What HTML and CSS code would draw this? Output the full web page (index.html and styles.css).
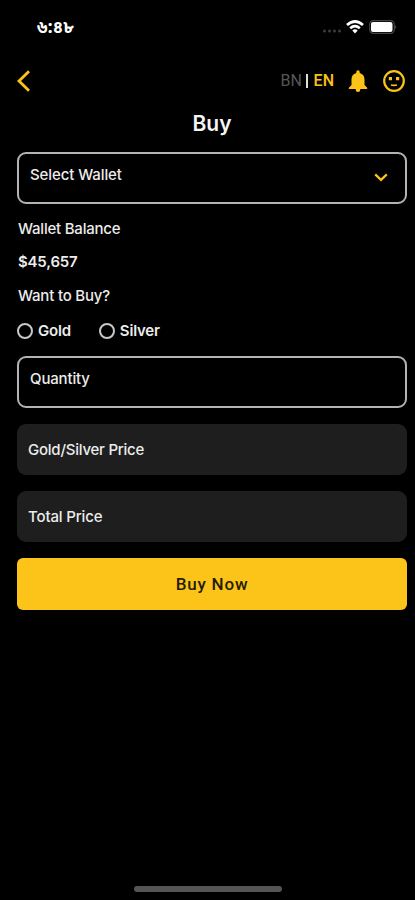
FILE: index.html
```html
<!DOCTYPE html>
<html lang="en">
<head>
<meta charset="utf-8">
<title>Buy</title>
<link rel="stylesheet" href="styles.css">
</head>
<body>
<main class="screen">
  <div class="status">
    <span class="time" lang="bn">৬:৪৮</span>
    <div class="signals">
      <svg class="dots" width="20" height="6" viewBox="0 0 20 6"><g fill="#3c3c3c"><circle cx="2.5" cy="3" r="1.5"/><circle cx="7.5" cy="3" r="1.5"/><circle cx="12.5" cy="3" r="1.5"/><circle cx="17.5" cy="3" r="1.5"/></g></svg>
      <svg class="wifi" width="18" height="14" viewBox="0 0 18 14"><g fill="none" stroke="#fff" stroke-width="2.7"><path d="M1 5Q9-2 17 5"/><path d="M4.2 8.2Q9 4 13.8 8.2"/></g><path d="M6.3 10.4Q9 8.2 11.7 10.4L9 13.6Z" fill="#fff"/></svg>
      <svg class="battery" width="28" height="14" viewBox="0 0 28 14"><rect x=".7" y=".7" width="24.6" height="12.6" rx="3.7" fill="none" stroke="#444" stroke-width="1.2"/><rect x="2" y="2" width="21.5" height="10" rx="2" fill="#fff"/><path d="M26.3 5Q28 7 26.3 9Z" fill="#777"/></svg>
    </div>
  </div>
  <header class="nav">
    <svg class="back" width="14" height="22" viewBox="0 0 14 22"><path d="M13 1.2L3 11L13 20.8" fill="none" stroke="#fcc419" stroke-width="2.8"/></svg>
    <div class="tools">
      <div class="lang"><span class="off">BN</span><i class="bar"></i><span class="on">EN</span></div>
      <svg class="bell" width="20" height="22" viewBox="0 0 20 22"><path d="M8.3 2a1.7 1.7 0 0 1 3.4 0v.9c3.2.8 4.8 3.3 4.8 6.6v5.6l2.7 2.7v1.2H.8v-1.2l2.7-2.7V9.500C3.500 6.200 5.100 3.700 8.300 2.900ZM7.700 18.900h4.600v.8a2.300 2.300 0 0 1-4.600 0Z" fill="#fcc419"/></svg>
      <svg class="face" width="22" height="22" viewBox="0 0 22 22"><circle cx="11" cy="11" r="9.800" fill="none" stroke="#fcc419" stroke-width="2.200"/><path d="M5.800 7H9v3.200H5.800zM13 7h3.200v3.200H13z" fill="#fcc419"/><path d="M8 15Q11 15.800 14 15" fill="none" stroke="#fcc419" stroke-width="1.800"/></svg>
    </div>
  </header>
  <h1 class="title">Buy</h1>
  <form class="form">
    <div class="field outlined"><span class="wallet">Select Wallet</span><svg width="14" height="9" viewBox="0 0 14 9"><path d="M1.200 1.400L7 6.900L12.800 1.400" fill="none" stroke="#fcc419" stroke-width="2.200"/></svg></div>
    <div class="facts">
      <p class="balance">Wallet Balance</p>
      <p class="amount">$45,657</p>
      <p class="question">Want to Buy?</p>
    </div>
    <div class="choices">
      <label class="choice"><i class="radio"></i><span>Gold</span></label>
      <label class="choice"><i class="radio"></i><span>Silver</span></label>
    </div>
    <div class="field outlined quantity"><span>Quantity</span></div>
    <div class="field filled"><span class="price">Gold/Silver Price</span></div>
    <div class="field filled"><span class="total">Total Price</span></div>
    <button class="buy" type="button">Buy Now</button>
  </form>
  <div class="home"></div>
</main>
</body>
</html>
```
FILE: styles.css
```css
* { box-sizing: border-box; }
body { margin: 0; background: #000; color: #ececec; font: 500 15px/20px Inter, "Liberation Sans", sans-serif; }
svg { display: block; }
.screen { height: 900px; display: flex; flex-direction: column; overflow: hidden; }
.status { height: 54px; padding: 0 18px 0 37px; display: flex; align-items: center; justify-content: space-between; }
.time { font: 700 17px/20px "Noto Sans Bengali", "Noto Sans", sans-serif; color: #fff; padding-top: 4px; letter-spacing: .3px; }
.signals { display: flex; align-items: center; }
.dots { margin: 8px 4px 0 0; }
.wifi { margin-right: 5px; }
.nav { height: 53px; padding: 0 10px 0 16px; display: flex; align-items: center; justify-content: space-between; }
.tools { display: flex; align-items: center; }
.lang { display: flex; align-items: center; font: 500 16px/20px Roboto, sans-serif; margin-right: 14px; }
.off { color: #565656; width: 25px; font-weight: 400; }
.bar { width: 2px; height: 14px; background: #ddd; margin-right: 6px; }
.on { color: #fcc419; }
.bell { margin-right: 15px; }
.title { margin: 0; height: 45px; padding: 5px 0 0 9px; font: 600 21px/24px Inter, sans-serif; text-align: center; color: #f5f5f5; }
.form { padding: 0 8px 0 17px; }
.field { height: 52px; display: flex; align-items: center; justify-content: space-between; }
.outlined { border: 2px solid #b3b3b3; border-radius: 9px; padding: 0 17px 7px 11px; }
.outlined svg { margin-top: 6px; }
.quantity { padding-bottom: 6px; letter-spacing: -.15px; }
.wallet { letter-spacing: -.1px; }
.filled { background: #1e1e1e; border-radius: 9px; padding: 1px 0 0 11px; margin-top: 16px; height: 51px; }
.price { letter-spacing: -.23px; }
.total { letter-spacing: -.15px; }
.facts { padding-top: 15px; display: grid; gap: 14px; }
.facts p { margin: 0 0 0 1px; }
.balance { letter-spacing: -.22px; }
.facts .amount { font-weight: 600; letter-spacing: -.2px; margin-top: -1px; }
.question { letter-spacing: -.2px; }
.choices { display: flex; gap: 28px; padding: 15px 0; font-weight: 600; letter-spacing: -.2px; }
.choice { display: flex; align-items: center; gap: 5px; }
.radio { width: 16px; height: 16px; border: 2px solid #c8c8c8; border-radius: 50%; }
.buy { display: block; width: 100%; height: 52px; margin-top: 16px; border: 0; border-radius: 6px; background: #fcc419; color: #241c05; font: 500 17px/20px Roboto, sans-serif; letter-spacing: .8px; }
.home { width: 148px; height: 6px; margin: auto 0 8px 134px; border-radius: 3px; background: #555; }
```
